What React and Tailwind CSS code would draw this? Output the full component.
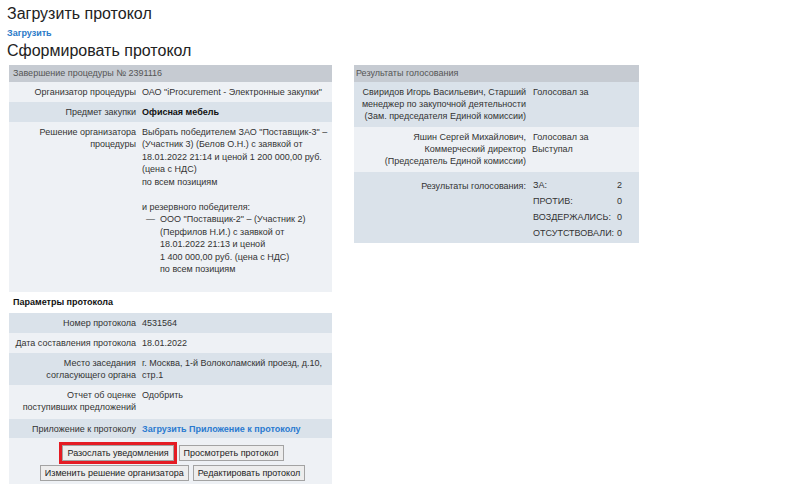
const DARK = "bg-[#dae2ea]";
const LIGHT = "bg-[#eef1f5]";

function Row({ label, children, tone, labelW = "131px", className = "" }) {
  return (
    <div className={`flex ${tone} ${className}`}>
      <div
        className="shrink-0 text-right whitespace-nowrap pr-[4px] pt-[4px] pb-[4px]"
        style={{ width: labelW }}
      >
        {label}
      </div>
      <div className="flex-1 whitespace-nowrap pl-[2px] pr-[3px] pt-[4px] pb-[4px]">{children}</div>
    </div>
  );
}

function Btn({ children }) {
  return (
    <button className="h-[16px] px-[4px] border border-[#a3a3a3] bg-[#ededed] text-[#222] text-[9px] leading-[14px]">
      {children}
    </button>
  );
}

export default function App() {
  return (
    <div
      className="w-[800px] h-[493px] bg-white text-[#333] overflow-hidden text-[9px] leading-[12px]"
      style={{ fontFamily: '"Liberation Sans", Arial, sans-serif' }}
    >
      <div className="pl-[7px] pt-[4px]">
        <h1 className="text-[16px] leading-[20px] text-[#222]">Загрузить протокол</h1>
        <a className="block mt-[4px] text-[9px] leading-[10px] font-bold text-[#2a7ac8]">Загрузить</a>
        <h1 className="mt-[3px] text-[16px] leading-[20px] text-[#222]">Сформировать протокол</h1>
      </div>

      <div className="flex items-start pl-[9px] mt-[4px] gap-[22px]">
        {/* left column */}
        <div className="w-[323px]">
          <div className="bg-[#c6cbd2] text-[#555] h-[17px] leading-[17px] px-[4px]">
            Завершение процедуры № 2391116
          </div>
          <Row label="Организатор процедуры" tone={LIGHT}>
            ОАО "iProcurement - Электронные закупки"
          </Row>
          <Row label="Предмет закупки" tone={DARK}>
            <span className="font-bold text-[#111]">Офисная мебель</span>
          </Row>
          <Row
            label={
              <>
                Решение организатора
                <br />
                процедуры
              </>
            }
            tone={LIGHT}
            className="h-[170px] leading-[12.4px]"
          >
            <div>
              Выбрать победителем ЗАО "Поставщик-3" –
              <br />
              (Участник 3) (Белов О.Н.) с заявкой от
              <br />
              18.01.2022 21:14 и ценой 1 200 000,00 руб.
              <br />
              (цена с НДС)
            </div>
            <div>по всем позициям</div>
            <div className="mt-[13px]">и резервного победителя:</div>
            <div className="flex">
              <span className="w-[18px] shrink-0 pl-[4px]">—</span>
              <div>
                ООО "Поставщик-2" – (Участник 2)
                <br />
                (Перфилов Н.И.) с заявкой от
                <br />
                18.01.2022 21:13 и ценой
                <br />1 400 000,00 руб. (цена с НДС)
                <br />
                по всем позициям
              </div>
            </div>
          </Row>

          <div className="font-bold text-[#111] pl-[4px] h-[21px] leading-[21px]">Параметры протокола</div>

          <Row label="Номер протокола" tone={DARK}>4531564</Row>
          <Row label="Дата составления протокола" tone={LIGHT}>18.01.2022</Row>
          <Row
            label={
              <>
                Место заседания
                <br />
                согласующего органа
              </>
            }
            tone={DARK}
          >
            г. Москва, 1-й Волоколамский проезд, д.10,
            <br />
            стр.1
          </Row>
          <Row
            label={
              <>
                Отчет об оценке
                <br />
                поступивших предложений
              </>
            }
            tone={LIGHT}
            className="h-[34px]"
          >
            Одобрить
          </Row>
          <Row label="Приложение к протоколу" tone={DARK} className="h-[19px]">
            <a className="font-bold text-[#2a7ad0]">Загрузить Приложение к протоколу</a>
          </Row>
          <div className={`${LIGHT} h-[46px] pt-[4px] flex flex-col items-center gap-[1px]`}>
            <div className="flex items-center gap-[2px] pl-[2px]">
              <div className="border-[3px] border-[#e41b23] flex">
                <Btn>Разослать уведомления</Btn>
              </div>
              <Btn>Просмотреть протокол</Btn>
            </div>
            <div className="flex gap-[4px] pl-[4px]">
              <Btn>Изменить решение организатора</Btn>
              <Btn>Редактировать протокол</Btn>
            </div>
          </div>
        </div>

        {/* right column */}
        <div className="w-[285px]">
          <div className="bg-[#c6cbd2] text-[#555] h-[17px] leading-[17px] px-[2px]">Результаты голосования</div>
          <Row
            label={
              <>
                Свиридов Игорь Васильевич, Старший
                <br />
                менеджер по закупочной деятельности
                <br />
                (Зам. председателя Единой комиссии)
              </>
            }
            tone={DARK}
            labelW="176px"
            className="h-[45px]"
          >
            <span className="pl-[1px]">Голосовал за</span>
          </Row>
          <Row
            label={
              <>
                Яшин Сергей Михайлович,
                <br />
                Коммерческий директор
                <br />
                (Председатель Единой комиссии)
              </>
            }
            tone={LIGHT}
            labelW="176px"
            className="h-[45px]"
          >
            <span className="pl-[1px]">
              Голосовал за
              <br />
              Выступал
            </span>
          </Row>
          <div className={`flex ${DARK} h-[71px]`}>
            <div className="w-[176px] shrink-0 text-right pr-[4px] pt-[8px]">Результаты голосования:</div>
            <div className="grid grid-cols-[auto_auto] content-start justify-start gap-x-[3px] pl-[3px] pt-[5px] leading-[16px]">
              <span>ЗА:</span>
              <span>2</span>
              <span>ПРОТИВ:</span>
              <span>0</span>
              <span>ВОЗДЕРЖАЛИСЬ:</span>
              <span>0</span>
              <span>ОТСУТСТВОВАЛИ:</span>
              <span>0</span>
            </div>
          </div>
        </div>
      </div>
    </div>
  );
}
